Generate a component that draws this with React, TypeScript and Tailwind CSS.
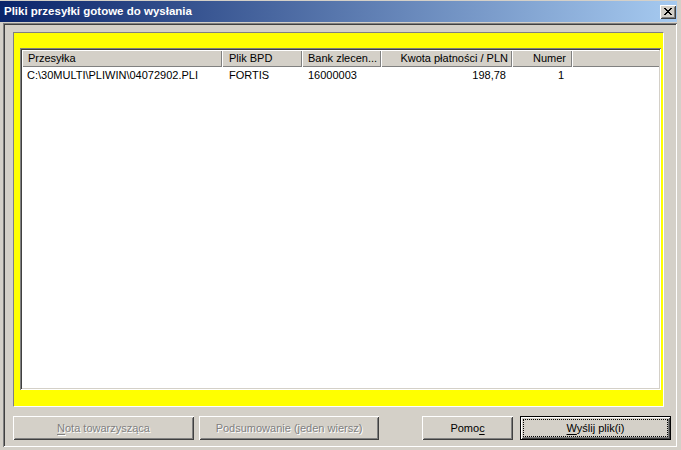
const raised =
  "shadow-[inset_1px_1px_0_#ffffff,inset_-1px_-1px_0_#404040,inset_2px_2px_0_#d4d0c8,inset_-2px_-2px_0_#808080]";
const sunken =
  "shadow-[inset_1px_1px_0_#808080,inset_-1px_-1px_0_#ffffff,inset_2px_2px_0_#404040,inset_-2px_-2px_0_#d4d0c8]";

const columns = [
  { label: "Przesyłka", w: "w-[200px]", head: "justify-start pl-[6px]", cell: "justify-start pl-[5px]" },
  { label: "Plik BPD", w: "w-[80px]", head: "justify-start pl-[7px]", cell: "justify-start pl-[7px]" },
  { label: "Bank zlecen...", w: "w-[79px]", head: "justify-start pl-[6px]", cell: "justify-start pl-[6px]" },
  { label: "Kwota płatności / PLN", w: "w-[131px]", head: "justify-end pr-[4px]", cell: "justify-end pr-[6px]" },
  { label: "Numer", w: "w-[60px]", head: "justify-end pr-[6px]", cell: "justify-end pr-[8px]" },
];

const row = ["C:\\30MULTI\\PLIWIN\\04072902.PLI", "FORTIS", "16000003", "198,78", "1"];

export default function App() {
  return (
    <div className="flex h-[450px] w-[681px] flex-col overflow-hidden bg-[#d4d0c8] pt-[1px] font-['Liberation_Sans',Arial,sans-serif] text-[11px] font-normal text-black">
      {/* title bar */}
      <div className="flex h-[21px] w-[677px] shrink-0 items-center bg-[linear-gradient(to_right,#0a246a,#a6caf0)] pl-[4px] pr-[1px]">
        <span className="text-[11.5px] font-bold leading-none text-white">Pliki przesyłki gotowe do wysłania</span>
        <div className={`ml-auto flex h-[14px] w-[16px] items-center justify-center bg-[#d4d0c8] ${raised}`}>
          <svg width="8" height="7" viewBox="0 0 8 7" shapeRendering="crispEdges">
            <path
              d="M0 0h2v1h-2zM6 0h2v1h-2zM1 1h2v1h-2zM5 1h2v1h-2zM2 2h4v1h-4zM3 3h2v1h-2zM2 4h4v1h-4zM1 5h2v1h-2zM5 5h2v1h-2zM0 6h2v1h-2zM6 6h2v1h-2z"
              fill="#000"
            />
          </svg>
        </div>
      </div>

      {/* body */}
      <div className={`ml-[3px] mt-[1px] mb-[3px] flex w-[674px] flex-1 flex-col pl-[10px] pt-[9px] ${sunken}`}>
        <div className="h-[375px] w-[651px] border border-b-white border-l-[#808080] border-r-white border-t-[#808080] bg-[#ffff00] pl-[6px] pt-[15px]">
          <div className={`flex h-[342px] w-[641px] flex-col bg-white p-[2px] ${sunken}`}>
            <div className="flex h-[17px] shrink-0">
              {columns.map((c) => (
                <div
                  key={c.label}
                  className={`flex h-full items-center bg-[#d4d0c8] ${c.w} ${c.head} shadow-[inset_1px_1px_0_#ffffff,inset_-1px_-1px_0_#808080]`}
                >
                  <span className="whitespace-nowrap leading-none">{c.label}</span>
                </div>
              ))}
              <div className="h-full flex-1 bg-[#d4d0c8] shadow-[inset_1px_1px_0_#ffffff,inset_0_-1px_0_#808080]" />
            </div>
            <div className="flex h-[16px]">
              {columns.map((c, i) => (
                <div key={c.label} className={`flex h-full items-center ${c.w} ${c.cell}`}>
                  <span className="whitespace-nowrap leading-none">{row[i]}</span>
                </div>
              ))}
            </div>
          </div>
        </div>

        {/* buttons */}
        <div className="mt-[9px] flex h-[24px]">
          <div className={`flex h-full w-[181px] items-center justify-center bg-[#d4d0c8] text-[#808080] [text-shadow:1px_1px_0_#ffffff] ${raised}`}>
            <span>
              <span className="underline underline-offset-2">N</span>ota towarzysząca
            </span>
          </div>
          <div className={`ml-[5px] flex h-full w-[180px] items-center justify-center bg-[#d4d0c8] text-[#808080] [text-shadow:1px_1px_0_#ffffff] ${raised}`}>
            Podsumowanie (jeden wiersz)
          </div>
          <div className={`ml-[43px] flex h-full w-[91px] items-center justify-center bg-[#d4d0c8] ${raised}`}>
            <span>
              Pomo<span className="underline underline-offset-2">c</span>
            </span>
          </div>
          <div className="ml-[7px] h-full w-[151px] border border-black bg-[#d4d0c8]">
            <div className={`flex h-full w-full items-center justify-center p-[2px] ${raised}`}>
              <div className="flex h-full w-full items-center justify-center border border-dotted border-black">
                <span>
                  <span className="underline underline-offset-2">W</span>yślij plik(i)
                </span>
              </div>
            </div>
          </div>
        </div>
      </div>
    </div>
  );
}
